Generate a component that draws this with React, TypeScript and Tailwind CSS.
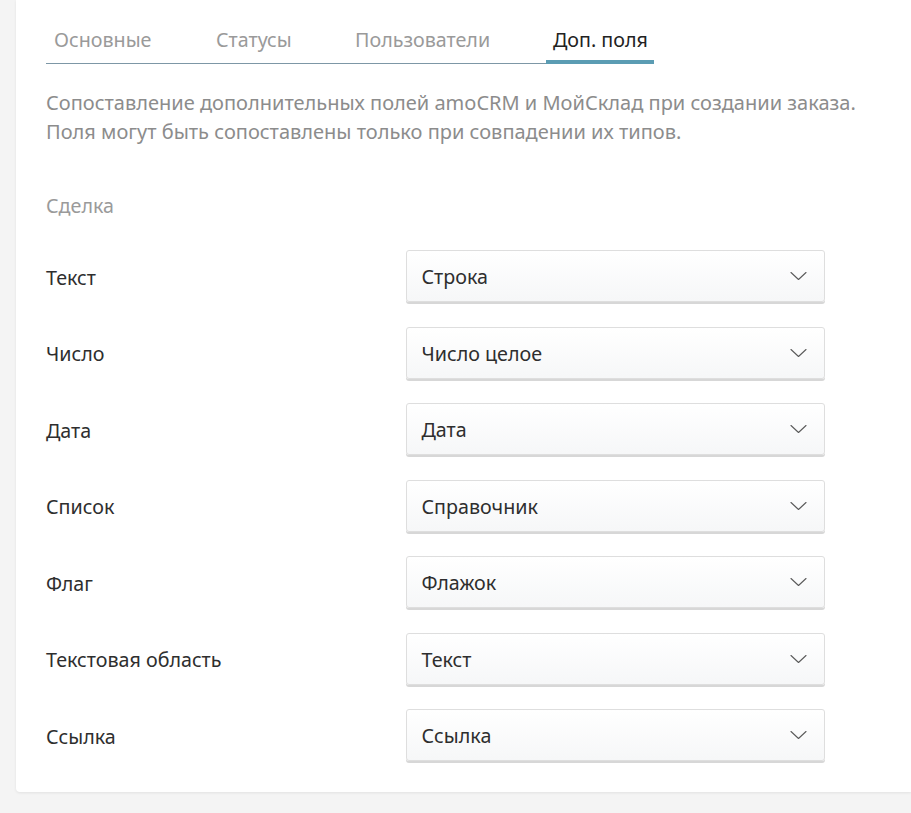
import React from "react";

const rows: [string, string][] = [
  ["Текст", "Строка"],
  ["Число", "Число целое"],
  ["Дата", "Дата"],
  ["Список", "Справочник"],
  ["Флаг", "Флажок"],
  ["Текстовая область", "Текст"],
  ["Ссылка", "Ссылка"],
];

const tabs = [
  { label: "Основные", x: "w-[162px]", active: false },
  { label: "Статусы", x: "w-[139px]", active: false },
  { label: "Пользователи", x: "w-[199px]", active: false },
  { label: "Доп. поля", x: "w-[108px]", active: true },
];

function Chevron() {
  return (
    <svg width="17" height="10" viewBox="0 0 17 10" fill="none">
      <path d="M1 1.5 L8.5 8.5 L16 1.5" stroke="#5a5a5a" strokeWidth="1.1" strokeLinecap="round" strokeLinejoin="round" />
    </svg>
  );
}

export default function App() {
  return (
    <div
      className="min-h-[813px] bg-[#f4f4f4] pl-[16px] pb-[21px] text-[#333]"
      style={{ fontFamily: '"Noto Sans", "Open Sans", sans-serif' }}
    >
      <div className="bg-white rounded-bl-[4px] shadow-[0_1px_3px_rgba(0,0,0,0.08)] pl-[30px] pr-[86px] pt-[22px] pb-[31px] h-[792px] box-border">
        <div className="w-[608px] flex border-b border-[#7d97a6] h-[42px]">
          {tabs.map((t) => (
            <div
              key={t.label}
              className={`${t.x} relative flex justify-start ${t.active ? "pl-[7px]" : "pl-[8px]"}`}
            >
              <span
                className={`text-[19.7px] leading-[36px] ${t.active ? "text-[#222]" : "text-[#9a9a9a]"}`}
              >
                {t.label}
              </span>
              {t.active && (
                <div className="absolute left-0 right-0 bottom-[-1px] h-[4px] bg-[#5b9cb3]" />
              )}
            </div>
          ))}
        </div>
        <p className="mt-[24px] text-[20px] leading-[29px] text-[#8c8c8c] whitespace-nowrap">
          Сопоставление дополнительных полей amoCRM и МойСклад при создании заказа.
          <br />
          Поля могут быть сопоставлены только при совпадении их типов.
        </p>
        <div className="mt-[45px] text-[19.7px] leading-[30px] text-[#9a9a9a]">Сделка</div>
        <div className="mt-[29px] flex flex-col gap-[24.5px]">
          {rows.map(([label, value]) => (
            <div key={label} className="flex items-center h-[52px]">
              <div className="w-[360px] pt-[3px] text-[19.7px] text-[#2e2e2e]">{label}</div>
              <div className="w-[420px] h-[52px] flex items-center justify-between pl-[15px] pr-[17px] border border-[#dedede] rounded-[3px] bg-gradient-to-b from-white to-[#f6f7f8] shadow-[0_2px_0_#d7d7d7]">
                <span className="pt-[2px] text-[19.7px] text-[#2e2e2e]">{value}</span>
                <Chevron />
              </div>
            </div>
          ))}
        </div>
      </div>
    </div>
  );
}
